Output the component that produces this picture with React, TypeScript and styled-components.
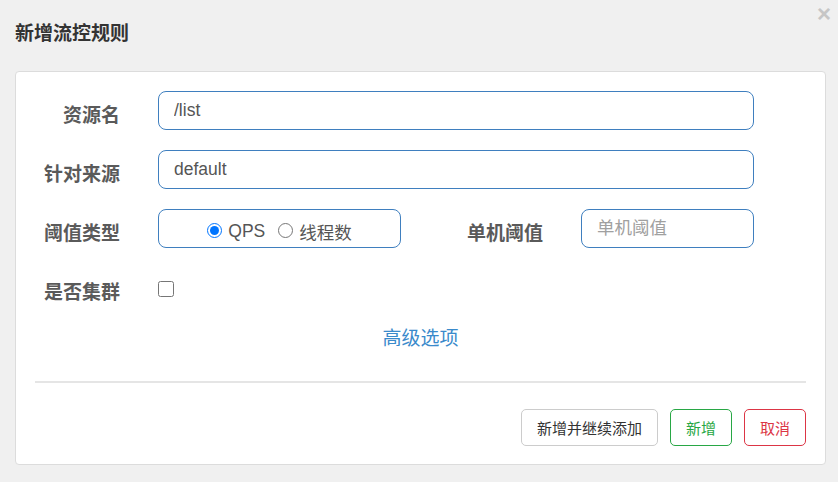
import React from "react";
import styled, { createGlobalStyle } from "styled-components";

const Global = createGlobalStyle`
  html, body { margin: 0; padding: 0; background: #f0f0f0; }
  body { font-family: "Liberation Sans", "Noto Sans CJK SC", sans-serif; }
  * { box-sizing: border-box; }
`;

const Page = styled.div`
  position: relative;
  width: 838px;
  height: 482px;
  padding: 0 12px 17px 15px;
  display: flex;
  flex-direction: column;
`;

const Header = styled.div`
  height: 71px;
  display: flex;
  align-items: center;
  padding-bottom: 8px;
`;

const Title = styled.h4`
  margin: 0;
  font-family: "Noto Sans CJK SC", sans-serif;
  font-size: 19px;
  font-weight: 700;
  color: #333;
`;

const Close = styled.span`
  position: absolute;
  top: 2px;
  right: 7px;
  font-family: "Liberation Sans", sans-serif;
  font-size: 24px;
  font-weight: 700;
  color: #c6c6c6;
  line-height: 1;
`;

const Card = styled.div`
  flex: 1;
  background: #fff;
  border: 1px solid #dcdcdc;
  border-radius: 4px;
  padding: 19px 19px 18px 19px;
  display: flex;
  flex-direction: column;
`;

const Row = styled.div`
  display: flex;
  align-items: center;
  height: 39px;
  margin-bottom: 20px;
`;

const Label = styled.label<{ $w: number }>`
  width: ${(p) => p.$w}px;
  flex-shrink: 0;
  text-align: right;
  padding-right: 38px;
  padding-top: 6px;
  font-family: "Noto Sans CJK SC", sans-serif;
  font-size: 19px;
  font-weight: 700;
  color: #5a5a5a;
`;

const TextInput = styled.input<{ $w: number }>`
  width: ${(p) => p.$w}px;
  height: 39px;
  border: 1px solid #3f7fbf;
  border-radius: 8px;
  padding: 0 15px;
  font-family: "Liberation Sans", "Noto Sans CJK SC", sans-serif;
  font-size: 17.5px;
  color: #555;
  outline: none;
  &::placeholder {
    color: #a0a0a0;
    font-family: "Noto Sans CJK SC", sans-serif;
  }
`;

const RadioBox = styled.div`
  width: 243px;
  height: 39px;
  border: 1px solid #3f7fbf;
  border-radius: 8px;
  display: flex;
  align-items: center;
  justify-content: center;
  gap: 13px;
`;

const RadioOption = styled.label`
  display: flex;
  align-items: center;
  gap: 6px;
  font-family: "Liberation Sans", "Noto Sans CJK SC", sans-serif;
  font-size: 17.5px;
  color: #555;
  padding-top: 6px;
`;

const Radio = styled.input`
  width: 15px;
  height: 15px;
  margin: 0 0 2px 0;
`;

const Check = styled.input`
  width: 16px;
  height: 16px;
  margin: 2px 0 0 0;
`;

const AdvancedLink = styled.a`
  display: block;
  text-align: center;
  margin-top: -4px;
  font-family: "Noto Sans CJK SC", sans-serif;
  font-size: 19px;
  color: #3a8acb;
  text-decoration: none;
  cursor: pointer;
`;

const Divider = styled.hr`
  margin: 31px 0 0 0;
  border: none;
  border-top: 2px solid #e5e5e5;
`;

const Footer = styled.div`
  display: flex;
  justify-content: flex-end;
  gap: 12px;
  margin-top: auto;
`;

const Button = styled.button<{ $c: string; $b: string }>`
  height: 37px;
  padding: 0 15px;
  background: #fff;
  border: 1px solid ${(p) => p.$b};
  border-radius: 5px;
  color: ${(p) => p.$c};
  font-family: "Noto Sans CJK SC", sans-serif;
  font-size: 15px;
`;

export default function App() {
  return (
    <>
      <Global />
      <Page>
        <Header>
          <Title>新增流控规则</Title>
        </Header>
        <Close>×</Close>
        <Card>
          <Row>
            <Label $w={123}>资源名</Label>
            <TextInput $w={596} defaultValue="/list" />
          </Row>
          <Row>
            <Label $w={123}>针对来源</Label>
            <TextInput $w={596} defaultValue="default" />
          </Row>
          <Row>
            <Label $w={123}>阈值类型</Label>
            <RadioBox>
              <RadioOption>
                <Radio type="radio" name="grade" defaultChecked />
                QPS
              </RadioOption>
              <RadioOption>
                <Radio type="radio" name="grade" />
                线程数
              </RadioOption>
            </RadioBox>
            <Label $w={180}>单机阈值</Label>
            <TextInput $w={173} placeholder="单机阈值" />
          </Row>
          <Row>
            <Label $w={123}>是否集群</Label>
            <Check type="checkbox" />
          </Row>
          <AdvancedLink>高级选项</AdvancedLink>
          <Divider />
          <Footer>
            <Button $c="#333" $b="#cccccc">新增并继续添加</Button>
            <Button $c="#28a745" $b="#28a745">新增</Button>
            <Button $c="#dc3545" $b="#dc3545">取消</Button>
          </Footer>
        </Card>
      </Page>
    </>
  );
}
